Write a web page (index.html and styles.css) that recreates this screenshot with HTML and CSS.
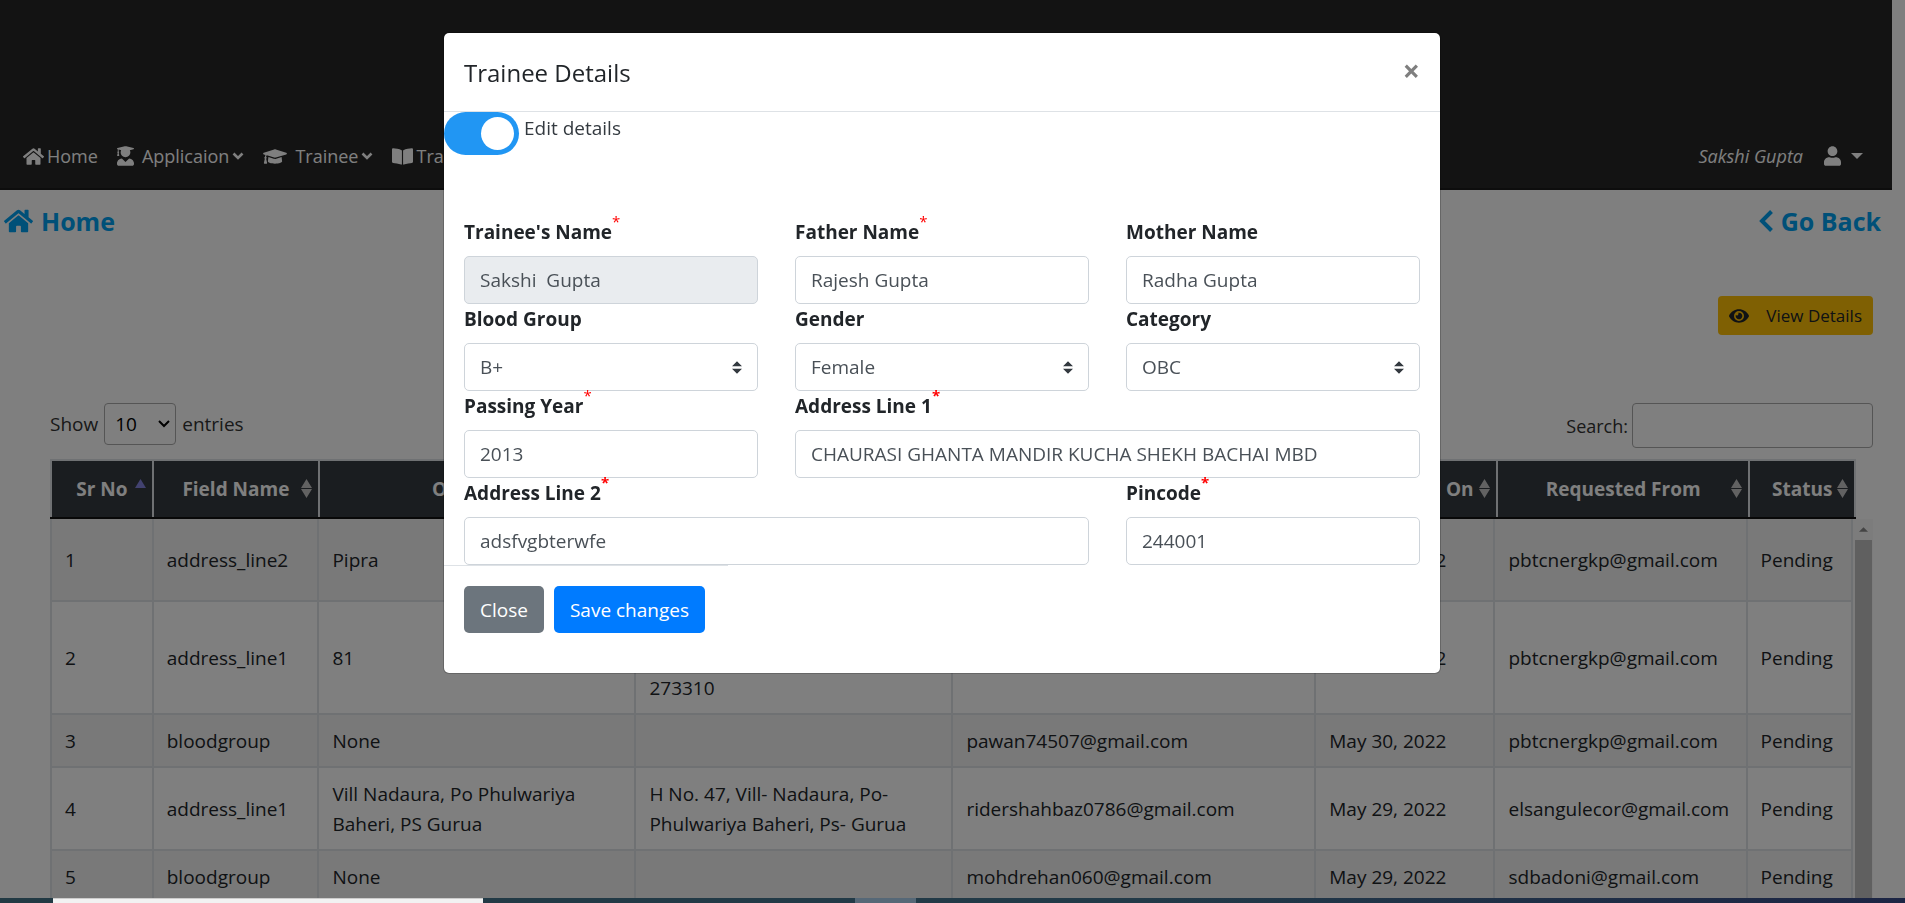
FILE: index.html
```html
<!DOCTYPE html>
<html lang="en">
<head>
<meta charset="utf-8">
<meta name="viewport" content="width=device-width, initial-scale=1">
<title>Trainee Details</title>
<link rel="stylesheet" href="styles.css">
</head>
<body>
<svg class="sprite" aria-hidden="true">
  <symbol id="home" viewBox="0 0 576 512"><path d="M280.37 148.26L96 300.11V464a16 16 0 0 0 16 16l112.06-.29a16 16 0 0 0 15.92-16V368a16 16 0 0 1 16-16h64a16 16 0 0 1 16 16v95.64a16 16 0 0 0 16 16.05L464 480a16 16 0 0 0 16-16V300L295.67 148.26a12.19 12.19 0 0 0-15.3 0zM571.6 251.47L488 182.56V44.05a12 12 0 0 0-12-12h-56a12 12 0 0 0-12 12v72.61L318.47 43a48 48 0 0 0-61 0L4.34 251.47a12 12 0 0 0-1.6 16.9l25.5 31A12 12 0 0 0 45.15 301l235.22-193.74a12.19 12.19 0 0 1 15.3 0L530.9 301a12 12 0 0 0 16.9-1.6l25.5-31a12 12 0 0 0-1.7-16.93z"/></symbol>
  <symbol id="user" viewBox="0 0 448 512"><path d="M224 256c70.7 0 128-57.3 128-128S294.7 0 224 0 96 57.3 96 128s57.3 128 128 128zm89.6 32h-16.7c-22.2 10.2-46.9 16-72.9 16s-50.6-5.8-72.9-16h-16.7C60.2 288 0 348.2 0 422.4V464c0 26.5 21.5 48 48 48h352c26.5 0 48-21.5 48-48v-41.6c0-74.2-60.2-134.4-134.4-134.4z"/></symbol>
  <symbol id="graduate" viewBox="0 0 448 512"><path d="M319.4 320.6L224 416l-95.4-95.4C57.1 323.7 0 382.2 0 454.4v9.6c0 26.5 21.5 48 48 48h352c26.5 0 48-21.5 48-48v-9.6c0-72.2-57.1-130.7-128.6-133.8zM13.6 79.8l6.4 1.5v58.4c-7 4.2-12 11.5-12 20.3 0 8.4 4.6 15.4 11.1 19.7L3.5 242c-1.7 6.9 2.1 14 7.6 14h41.8c5.5 0 9.3-7.1 7.6-14l-15.6-62.3C51.4 175.4 56 168.4 56 160c0-8.8-5-16.1-12-20.3V87.1l66 15.9c-8.6 17.2-14 36.4-14 57 0 70.7 57.3 128 128 128s128-57.3 128-128c0-20.6-5.3-39.8-14-57l96.3-23.2c18.2-4.4 18.2-27.1 0-31.5l-190.4-46c-13-3.1-26.7-3.1-39.7 0L13.6 48.2c-18.1 4.4-18.1 27.2 0 31.6z"/></symbol>
  <symbol id="cap" viewBox="0 0 640 512"><path d="M622.34 153.2L343.4 67.5c-15.2-4.67-31.6-4.67-46.79 0L17.66 153.2c-23.54 7.23-23.54 38.36 0 45.59l48.63 14.94c-10.67 13.19-17.23 29.28-17.88 46.9C38.78 266.15 32 276.11 32 288c0 10.78 5.68 19.85 13.86 25.65L20.33 428.53C18.11 438.52 25.71 448 35.94 448h56.11c10.24 0 17.84-9.48 15.62-19.47L82.14 313.65C90.32 307.85 96 298.78 96 288c0-11.57-6.47-21.25-15.66-26.87.76-15.02 8.44-28.3 20.69-36.72L296.6 284.5c9.06 2.78 26.44 6.25 46.79 0l278.95-85.7c23.55-7.24 23.55-38.36 0-45.6zM352.79 315.09c-28.53 8.76-52.84 3.92-65.59 0l-145.02-44.55L128 384c0 35.35 85.96 64 192 64s192-28.65 192-64l-14.18-113.47-145.03 44.56z"/></symbol>
  <symbol id="book" viewBox="0 0 576 512"><path d="M542.22 32.05c-54.8 3.11-163.72 14.43-230.96 55.59-4.64 2.84-7.27 7.89-7.27 13.17v363.87c0 11.55 12.63 18.85 23.28 13.49 69.18-34.82 169.23-44.32 218.7-46.92 16.89-.89 30.02-14.43 30.02-30.66V62.75c.01-17.71-15.35-31.74-33.77-30.7zM264.73 87.64C197.5 46.48 88.58 35.17 33.78 32.05 15.36 31.01 0 45.04 0 62.75V400.6c0 16.24 13.13 29.78 30.02 30.66 49.49 2.6 149.59 12.11 218.77 46.95 10.62 5.35 23.21-1.94 23.21-13.46V100.63c0-5.29-2.62-10.14-7.27-12.99z"/></symbol>
  <symbol id="eye" viewBox="0 0 576 512"><path d="M572.52 241.4C518.29 135.59 410.93 64 288 64S57.68 135.64 3.48 241.41a32.35 32.35 0 0 0 0 29.19C57.71 376.41 165.07 448 288 448s230.32-71.64 284.52-177.41a32.35 32.35 0 0 0 0-29.19zM288 400a144 144 0 1 1 144-144 143.93 143.93 0 0 1-144 144zm0-240a95.31 95.31 0 0 0-25.31 3.79 47.85 47.85 0 0 1-66.9 66.9A95.78 95.78 0 1 0 288 160z"/></symbol>
  <symbol id="down" viewBox="0 0 12 10"><path d="M1.5 2.5L6 7l4.500-4.500" fill="none" stroke="currentColor" stroke-width="2.600"/></symbol>
  <symbol id="left" viewBox="0 0 14 22"><path d="M12.500 1.500L3 11l9.500 9.500" fill="none" stroke="currentColor" stroke-width="4"/></symbol>
  <symbol id="caret" viewBox="0 0 12 6"><path d="M0 0h12L6 6z"/></symbol>
  <symbol id="sort" viewBox="0 0 11 19"><path d="M5.500 0L11 9H0zM0 10h11l-5.500 9z"/></symbol>
  <symbol id="sort-up" viewBox="0 0 11 19"><path d="M5.500 0L11 9H0z"/></symbol>
</svg>

<div class="page">
  <header class="topbar">
    <nav class="nav">
      <a href="#"><svg class="i-21"><use href="#home"/></svg>Home</a>
      <a href="#" class="wide"><svg class="i-17"><use href="#graduate"/></svg>Applicaion<svg class="i-down"><use href="#down"/></svg></a>
      <a href="#" class="wide"><svg class="i-24"><use href="#cap"/></svg>Trainee<svg class="i-down"><use href="#down"/></svg></a>
      <a href="#"><svg class="i-21"><use href="#book"/></svg>Training</a>
    </nav>
    <a href="#" class="account"><i>Sakshi Gupta</i><svg class="i-17"><use href="#user"/></svg><svg class="i-caret"><use href="#caret"/></svg></a>
  </header>

  <div class="crumbs">
    <a href="#"><svg class="i-29"><use href="#home"/></svg>Home</a>
    <a href="#"><svg class="i-left"><use href="#left"/></svg>Go Back</a>
  </div>

  <main class="content">
    <div class="actions"><button class="view" type="button"><svg class="i-20"><use href="#eye"/></svg>View Details</button></div>
    <div class="tools">
      <label class="length">Show <select><option>10</option></select> entries</label>
      <label class="search">Search:<input type="search"></label>
    </div>
    <table class="grid head">
      <colgroup><col class="c1"><col class="c2"><col class="c3"><col class="c3"><col class="c5"><col class="c6"><col class="c7"><col class="c8"></colgroup>
      <thead><tr>
        <th><span>Sr No<svg class="sort up"><use href="#sort-up"/></svg></span></th>
        <th><span>Field Name<svg class="sort"><use href="#sort"/></svg></span></th>
        <th><span>Old Value<svg class="sort"><use href="#sort"/></svg></span></th>
        <th><span>New Value<svg class="sort"><use href="#sort"/></svg></span></th>
        <th><span>Requested By<svg class="sort"><use href="#sort"/></svg></span></th>
        <th><span>Requested On<svg class="sort"><use href="#sort"/></svg></span></th>
        <th><span>Requested From<svg class="sort"><use href="#sort"/></svg></span></th>
        <th><span>Status<svg class="sort"><use href="#sort"/></svg></span></th>
      </tr></thead>
    </table>
    <div class="scroller">
      <table class="grid rows">
        <colgroup><col class="c1"><col class="c2"><col class="c3"><col class="c3"><col class="c5"><col class="c6"><col class="c7"><col class="c8"></colgroup>
        <tbody>
          <tr><td>1</td><td>address_line2</td><td>Pipra</td><td><br><br></td><td></td><td>May 30, 2022</td><td>pbtcnergkp@gmail.com</td><td>Pending</td></tr>
          <tr><td>2</td><td>address_line1</td><td>81</td><td><br><br>273310</td><td></td><td>May 30, 2022</td><td>pbtcnergkp@gmail.com</td><td>Pending</td></tr>
          <tr><td>3</td><td>bloodgroup</td><td>None</td><td></td><td>pawan74507@gmail.com</td><td>May 30, 2022</td><td>pbtcnergkp@gmail.com</td><td>Pending</td></tr>
          <tr><td>4</td><td>address_line1</td><td>Vill Nadaura, Po Phulwariya Baheri, PS Gurua</td><td>H No. 47, Vill- Nadaura, Po- Phulwariya Baheri, Ps- Gurua</td><td>ridershahbaz0786@gmail.com</td><td>May 29, 2022</td><td>elsangulecor@gmail.com</td><td>Pending</td></tr>
          <tr><td>5</td><td>bloodgroup</td><td>None</td><td></td><td>mohdrehan060@gmail.com</td><td>May 29, 2022</td><td>sdbadoni@gmail.com</td><td>Pending</td></tr>
        </tbody>
      </table>
      <div class="bar"><svg class="bar-up"><use href="#caret"/></svg><div class="thumb"></div></div>
    </div>
  </main>
</div>

<div class="overlay">
  <div class="modal" role="dialog" aria-labelledby="title">
    <div class="modal-head">
      <h5 id="title">Trainee Details</h5>
      <button class="close" type="button" aria-label="Close">×</button>
    </div>
    <label class="toggle"><input type="checkbox" checked><span>Edit details</span></label>
    <form class="fields">
      <div class="field"><label for="f1">Trainee's Name<sup class="thin">*</sup></label><input id="f1" value="Sakshi  Gupta" disabled></div>
      <div class="field"><label for="f2">Father Name<sup class="thin">*</sup></label><input id="f2" value="Rajesh Gupta"></div>
      <div class="field"><label for="f3">Mother Name</label><input id="f3" value="Radha Gupta"></div>
      <div class="field"><label for="f4">Blood Group</label><select id="f4"><option>B+</option></select></div>
      <div class="field"><label for="f5">Gender</label><select id="f5"><option>Female</option></select></div>
      <div class="field"><label for="f6">Category</label><select id="f6"><option>OBC</option></select></div>
      <div class="field"><label for="f7">Passing Year<sup class="thin">*</sup></label><input id="f7" value="2013"></div>
      <div class="field double"><label for="f8">Address Line 1<sup>*</sup></label><input id="f8" value="CHAURASI GHANTA MANDIR KUCHA SHEKH BACHAI MBD"></div>
      <div class="field double"><label for="f9">Address Line 2<sup>*</sup></label><input id="f9" value="adsfvgbterwfe"></div>
      <div class="field"><label for="f10">Pincode<sup>*</sup></label><input id="f10" value="244001"></div>
    </form>
    <div class="modal-foot">
      <button class="btn gray" type="button">Close</button>
      <button class="btn blue" type="button">Save changes</button>
    </div>
  </div>
</div>
<div class="taskbar"><div class="task-search"></div><div class="task-active"></div></div>
</body>
</html>
```
FILE: styles.css
```css
* { box-sizing: border-box; }
body {
  margin: 0;
  height: 100vh;
  display: flex;
  flex-direction: column;
  overflow: hidden;
  background: #fff;
  color: #212529;
  font: 19px/30px "Open Sans", "Noto Sans", sans-serif;
}
a { color: inherit; text-decoration: none; }
button, input, select { font: inherit; color: inherit; margin: 0; }
svg { fill: currentColor; flex: none; }
.sprite { display: none; }

.i-17 { width: 17px; height: 20px; }
.i-20 { width: 20px; height: 18px; }
.i-21 { width: 21px; height: 19px; }
.i-24 { width: 24px; height: 19px; }
.i-29 { width: 29px; height: 26px; }
.i-left { width: 14px; height: 22px; }
.i-down { width: 12px; height: 10px; }
.i-caret { width: 12px; height: 6px; }

.page { flex: 1; min-height: 0; display: flex; flex-direction: column; padding-right: 13px; }
.topbar {
  display: flex;
  justify-content: space-between;
  padding: 141px 29px 17px 23px;
  background: #262626;
  border-bottom: 2px solid #1a1a1a;
  color: #fff;
  font-size: 18px;
}
.nav, .nav a, .account { display: flex; align-items: center; }
.nav { gap: 19px; }
.nav a { gap: 3px; }
.nav .wide svg:first-child { margin-right: 5px; }
.account { gap: 10px; }
.account i { margin-right: 11px; }

.crumbs {
  display: flex;
  justify-content: space-between;
  padding: 13px 11px 0 4px;
  color: #00a0f0;
  font-size: 25px;
  font-weight: 700;
  line-height: 36px;
}
.crumbs a { display: flex; align-items: center; gap: 8px; }

.content { flex: 1; min-height: 0; display: flex; flex-direction: column; padding: 57px 19px 0 50px; }
.actions { display: flex; justify-content: flex-end; }
.view {
  display: flex;
  align-items: center;
  gap: 17px;
  height: 39px;
  padding: 0 11px;
  border: 0;
  border-radius: 4px;
  background: #ffc107;
  font-size: 17px;
}
.tools { display: flex; justify-content: space-between; align-items: flex-start; margin-top: 68px; color: #333; }
.length, .search { display: flex; align-items: center; }
.length { gap: 6px; }
.search { gap: 4px; }
.search { font-size: 18px; }
.length select {
  width: 72px;
  height: 42px;
  padding: 0 10px;
  appearance: none;
  color: #000;
  border: 1px solid #aaa;
  border-radius: 4px;
  background: url("data:image/svg+xml,%3Csvg xmlns='http://www.w3.org/2000/svg' viewBox='0 0 12 8'%3E%3Cpath d='M1 1l5 5 5-5' fill='none' stroke='black' stroke-width='2'/%3E%3C/svg%3E") no-repeat right 5px center / 12px 8px;
}
.search input { width: 241px; height: 45px; border: 1px solid #aaa; border-radius: 4px; background: none; }

.grid { table-layout: fixed; border-collapse: collapse; flex: none; }
.c1 { width: 5.65%; }
.c2 { width: 9.2%; }
.c3 { width: 17.6%; }
.c5 { width: 20.15%; }
.c6 { width: 9.95%; }
.c7 { width: 14%; }
.c8 { width: 5.85%; }
.head { width: calc(100% - 17px); margin-top: 11px; }
.head th { height: 58px; padding: 0; background: #343a40; color: #fff; border: 2px solid #dee2e6; border-bottom: 2px solid #111; }
.head th span { display: block; position: relative; }
.sort { position: absolute; right: 6px; top: 5px; width: 11px; height: 19px; color: #c4c4c4; }
.sort.up { color: #8484e0; }
.scroller { flex: 1; min-height: 0; display: flex; overflow: hidden; }
.rows { width: calc(100% - 20px); align-self: flex-start; }
.rows td { padding: 11px 13px 10px; border: 2px solid #dee2e6; }
.rows tr:first-child td { border-top: 0; }
.rows tr:nth-child(odd) { background: #f2f2f2; }
.bar { width: 20px; display: flex; flex-direction: column; align-items: center; background: #f8f8f8; }
.bar-up { width: 9px; height: 5px; margin: 8px 0; transform: rotate(180deg); color: #888; }
.thumb { width: 17px; flex: 1; background: #c1c1c1; }

.overlay {
  position: fixed;
  inset: 0 0 5px;
  display: flex;
  justify-content: center;
  align-items: flex-start;
  padding: 32px 21px 0 0;
  background: rgba(0, 0, 0, .5);
}
.modal { width: 998px; max-width: 100%; background: #fff; background-clip: padding-box; border: 1px solid rgba(0, 0, 0, .2); border-radius: 6px; }
.modal-head {
  display: flex;
  justify-content: space-between;
  align-items: flex-start;
  padding: 21px 20px 19px;
  border-bottom: 1px solid #dee2e6;
}
.modal-head h5 { margin: 0; font-size: 24px; font-weight: 500; line-height: 38px; }
.close { padding: 0; border: 0; background: none; color: #7f7f7f; font-size: 30px; font-weight: 700; line-height: 34px; }
.toggle { display: flex; gap: 5px; color: #343a40; }
.toggle span { padding-top: 1px; }
.toggle input {
  appearance: none;
  display: flex;
  justify-content: flex-end;
  width: 75px;
  height: 43px;
  padding: 5px;
  border-radius: 22px;
  background: #2196f3;
}
.toggle input::before { content: ""; width: 33px; height: 33px; border-radius: 50%; background: #fff; }
.fields { display: grid; grid-template-columns: repeat(3, 1fr); column-gap: 37px; padding: 62px 20px 0; }
.double { grid-column: span 2; }
.field label { display: block; margin-bottom: 9px; font-weight: 700; }
.field sup { color: red; font-size: 15px; line-height: 0; vertical-align: 12px; }
.field .thin { font-weight: 400; }
.field input, .field select {
  display: block;
  width: 100%;
  height: 48px;
  padding: 0 15px;
  color: #495057;
  border: 1px solid #ced4da;
  border-radius: 5px;
  background: #fff;
}
.field input:disabled { background: #e9ecef; }
.field select {
  appearance: none;
  background: #fff url("data:image/svg+xml,%3Csvg xmlns='http://www.w3.org/2000/svg' viewBox='0 0 4 5'%3E%3Cpath fill='%23343a40' d='M2 0L0 2h4zm0 5L0 3h4z'/%3E%3C/svg%3E") no-repeat right 15px center / 10px 13px;
}
.modal-foot { display: flex; gap: 10px; width: 284px; padding: 20px 20px 40px; border-top: 1px solid #dee2e6; }
.btn { flex: none; height: 47px; padding: 0 16px; border: 0; border-radius: 5px; color: #fff; }
.gray { background: #6c757d; }
.blue { background: #007bff; }

.taskbar { position: relative; display: flex; flex: none; height: 5px; padding-left: 53px; background: linear-gradient(90deg, #223a44, #223a48 60%, #1c2544); }
.task-search { width: 430px; background: #f2f2f2; border-top: 1px solid #ccc; }
.task-active { width: 61px; margin-left: 372px; background: #566877; }
```
